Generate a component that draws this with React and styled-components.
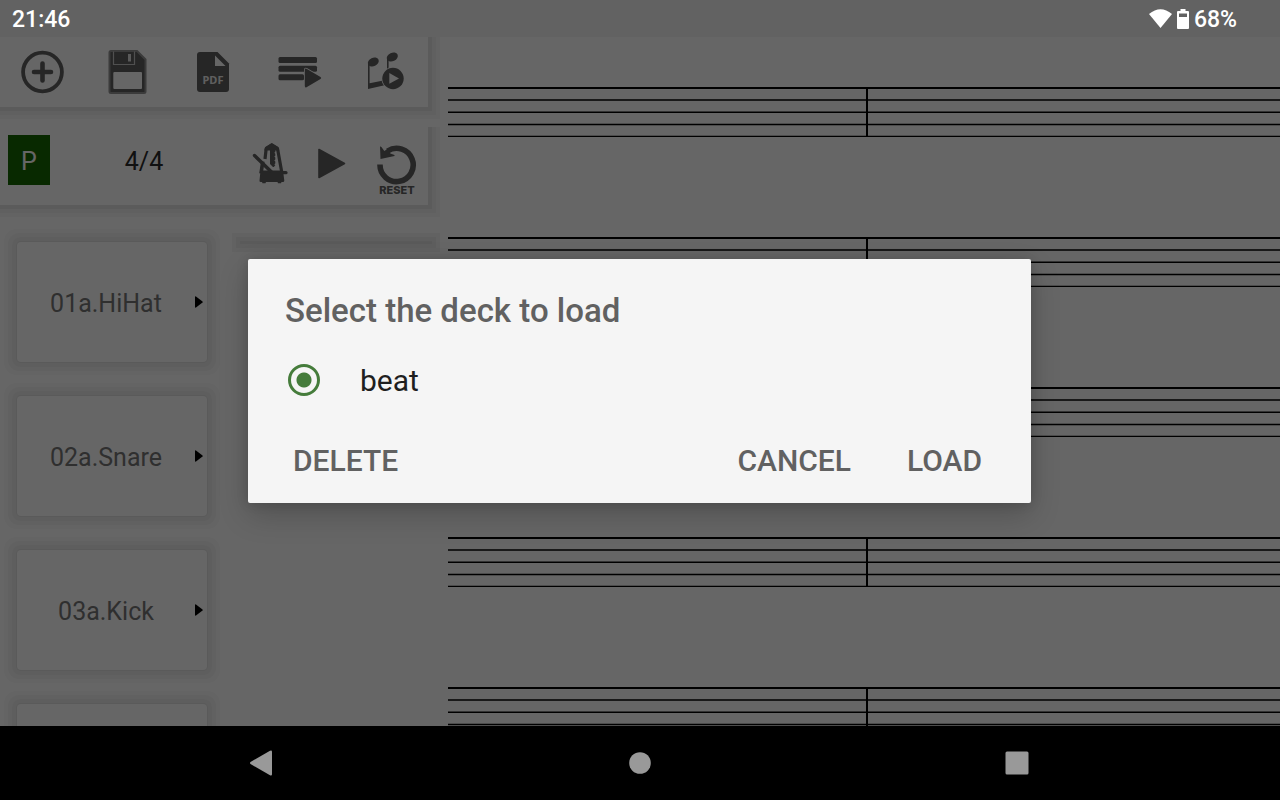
import React, { useState } from 'react'
import styled, { createGlobalStyle } from 'styled-components'

const GlobalStyle = createGlobalStyle`
  * {
    box-sizing: border-box;
  }
  body {
    margin: 0;
    background: #000;
    font-family: Roboto, "Liberation Sans", sans-serif;
  }
  button {
    border: 0;
    padding: 0;
    background: none;
    font-family: inherit;
    color: inherit;
    cursor: pointer;
  }
  svg {
    display: block;
  }
`

const Screen = styled.div`
  display: flex;
  flex-direction: column;
  height: 100vh;
  overflow: hidden;
`

const StatusBar = styled.header`
  display: flex;
  align-items: center;
  justify-content: space-between;
  flex: none;
  height: 37px;
  padding: 1px 43px 0 12px;
  background: #626262;
  color: #fff;
  font-size: 23px;
  font-weight: 500;
`

const StatusIcons = styled.div`
  display: flex;
  align-items: center;
  gap: 5px;
`

const Main = styled.main`
  position: relative;
  display: flex;
  flex: 1;
  min-height: 0;
  overflow: hidden;
  background: #fff;
`

const Panel = styled.section`
  flex: none;
  width: 448px;
`

const Bar = styled.div`
  width: 428px;
  margin-bottom: 20px;
  background: #fff;
  color: #5f5f5f;
  box-shadow: 0 0 0 4px #e4e4e4, 0 0 0 8px #f0f0f0, 0 0 0 12px #f8f8f8;
  clip-path: inset(0 -12px -12px 0);
`

const FileBar = styled(Bar)`
  display: grid;
  grid-template-columns: repeat(5, 1fr);
  height: 70px;
`

const PlayBar = styled(Bar)`
  display: flex;
  align-items: center;
  height: 78px;
  padding: 0 0 6px 8px;
  margin-bottom: 37px;
`

const IconButton = styled.button`
  display: flex;
  flex-direction: column;
  align-items: center;
  justify-content: center;
  width: ${({ $width }) => $width || 'auto'};
`

const ResetButton = styled(IconButton)`
  margin-top: 12px;
`

const ResetLabel = styled.span`
  font-family: Inter, sans-serif;
  font-size: 11px;
  line-height: 10px;
  font-weight: 800;
`

const ModeButton = styled.button`
  width: 42px;
  height: 50px;
  margin-bottom: 6px;
  padding-top: 2px;
  background: #146600;
  color: #fff;
  font-size: 25px;
`

const Signature = styled.button`
  flex: 1;
  height: 50px;
  margin-bottom: 4px;
  color: #2b2b2b;
  font-size: 25px;
`

const Decks = styled.div`
  display: grid;
  grid-template-columns: 190px 190px;
  gap: 34px;
  align-items: start;
  padding-left: 17px;
`

const Column = styled.div`
  display: flex;
  flex-direction: column;
  gap: 34px;
`

const Card = styled.button`
  display: flex;
  align-items: center;
  height: 120px;
  padding-right: 4px;
  border-radius: 4px;
  background: #fff;
  color: #777;
  font-size: 25px;
  box-shadow: 0 0 0 1px #e0e0e0, 0 0 0 5px #ebebeb, 0 0 0 9px #f2f2f2, 0 0 0 13px #fafafa;
`

const CardLabel = styled.span`
  flex: 1;
  padding-top: 2px;
`

const EmptyCard = styled.div`
  height: 1px;
  background: #e0e0e0;
  box-shadow: 0 0 0 1px #e0e0e0, 0 0 0 5px #ebebeb, 0 0 0 9px #f5f5f5;
`

const Score = styled.section`
  display: flex;
  flex-direction: column;
  flex: 1;
  min-width: 0;
  gap: 100px;
  padding-top: 50px;
`

const StaffLines = styled.svg`
  flex: none;
  width: 100%;
  height: 50px;
`

const Scrim = styled.div`
  position: absolute;
  inset: 0;
  display: flex;
  align-items: center;
  justify-content: center;
  padding: 0 1px 1px 0;
  background: rgba(0, 0, 0, 0.6);
`

const Dialog = styled.form`
  width: 90%;
  max-width: 783px;
  padding: 31px 37px 11px;
  border-radius: 2px;
  background: #f5f5f5;
  box-shadow: 0 12px 30px rgba(0, 0, 0, 0.2), 0 0 12px rgba(0, 0, 0, 0.15);
`

const DialogTitle = styled.h2`
  margin: 0;
  color: #616161;
  font-size: 33px;
  line-height: 42px;
  font-weight: 500;
`

const Option = styled.label`
  display: flex;
  align-items: center;
  gap: 40px;
  height: 60px;
  margin: 18px 0;
  padding-left: 3px;
  color: #1f1f1f;
  font-size: 30px;
`

const Radio = styled.input`
  appearance: none;
  flex: none;
  width: 32px;
  height: 32px;
  margin: 0;
  border: 3px solid #457c3b;
  border-radius: 50%;
  background: ${({ checked }) => (checked ? 'radial-gradient(circle, #457c3b 7px, transparent 8px)' : 'none')};
`

const Actions = styled.div`
  display: flex;
  gap: 40px;
  padding-right: 4px;
`

const Action = styled.button`
  height: 64px;
  padding: 0 8px;
  color: #616161;
  font-size: 30px;
  font-weight: 500;

  &:first-child {
    margin-right: auto;
  }
`

const NavBar = styled.nav`
  display: flex;
  flex: none;
  height: 74px;
  padding: 0 5.8%;
  background: #000;
  color: #999;
`

const NavButton = styled.button`
  display: flex;
  flex: 1;
  align-items: center;
  justify-content: center;
`

const AddIcon = () => (
  <svg width="48" height="48" viewBox="19 48 48 48" fill="none" stroke="currentColor">
    <circle cx="42.5" cy="72" r="19.4" strokeWidth="3.8" />
    <path d="M42.5 63.5v17M34 72h17" strokeWidth="4.6" strokeLinecap="round" />
  </svg>
)

const SaveIcon = () => (
  <svg width="48" height="48" viewBox="104 48 48 48">
    <path d="M111 51h26l8.5 8.5v32a1.5 1.5 0 0 1-1.5 1.5h-33a1.5 1.5 0 0 1-1.5-1.5v-39a1.5 1.5 0 0 1 1.5-1.5z" fill="currentColor" stroke="#939393" strokeWidth="2" />
    <path d="M113.5 51.5v13h21v-13" fill="none" stroke="#c8c8c8" strokeWidth="1.2" />
    <rect x="128" y="54" width="3" height="7.5" fill="#e0e0e0" />
    <rect x="113.3" y="72" width="28.7" height="17" rx="1" fill="#fff" />
  </svg>
)

const PdfIcon = () => (
  <svg width="48" height="48" viewBox="190 48 48 48">
    <path d="M200 52h17.500L229 63.500V89a3 3 0 0 1-3 3h-26a3 3 0 0 1-3-3V55a3 3 0 0 1 3-3z" fill="currentColor" />
    <path d="M215 55.500v10.500h10.500z" fill="#fff" />
    <text x="213" y="84" textAnchor="middle" fontFamily="Noto Sans, sans-serif" fontWeight="700" fontSize="11" fill="#eee">PDF</text>
  </svg>
)

const QueueIcon = () => (
  <svg width="48" height="48" viewBox="275 48 48 48" fill="currentColor">
    <rect x="277.5" y="57" width="38.5" height="6" rx="1.5" />
    <rect x="277.5" y="65.7" width="38.5" height="6" rx="1.5" />
    <rect x="277.5" y="74.3" width="25.5" height="6" rx="1.5" />
    <path d="M305.5 68.800l14 8.200q1.500 1 0 2l-14 8.200q-1.700.8-1.700-1.400v-15.800q0-2 1.700-1.200z" stroke="#fff" strokeWidth="1.6" paintOrder="stroke" />
  </svg>
)

const SongIcon = () => (
  <svg width="48" height="48" viewBox="361 48 48 48" fill="currentColor">
    <path d="M368 62h1.600v21.300l15-3v5L368 89z" />
    <ellipse cx="373.3" cy="62" rx="5.700" ry="4.200" transform="rotate(-25 373.3 62)" />
    <path d="M387 57h1.600v12H387z" />
    <ellipse cx="392.3" cy="57" rx="5.800" ry="4.200" transform="rotate(-25 392.3 57)" />
    <circle cx="393" cy="78.5" r="10.7" stroke="#fff" strokeWidth="1.6" paintOrder="stroke" />
    <path d="M389.3 73v10.800l9.700-5.300z" fill="#fff" />
  </svg>
)

const MetronomeIcon = () => (
  <svg width="40" height="44" viewBox="248 141 40 44" fill="none" stroke="currentColor">
    <path d="M265 159l1.200-10.500 5.500-3.500 5.800 3.500 4.500 25" strokeWidth="3.2" strokeLinejoin="round" />
    <path d="M264.3 150.500l1-3.500 6.500-4 6.500 4 1 3.500z" fill="currentColor" stroke="none" />
    <path d="M262.8 161.500l-1.800 12" strokeWidth="3.6" />
    <path d="M270 149h3.500l1.800 1v2l-1 .8 1 1v2l-1 .8 1 1v2l-1 .8 1 1v2l-1 .8 1 1-1.500 1.800h-.8l-3-3z" fill="currentColor" stroke="none" />
    <path d="M260.500 170.500h22.500l1.300 10q0 1.500-1.300 1.500h-1.500l-.5 1.200h-3l-.5-1.200h-11.500l-.5 1.200h-3l-.5-1.200h-1.200q-1.500 0-1.300-1.500z" fill="currentColor" stroke="none" />
    <path d="M254.5 155.500l17 16.500" strokeWidth="3.4" strokeLinecap="round" />
    <path d="M272 172.700h14" strokeWidth="3.2" strokeLinecap="round" />
  </svg>
)

const PlayIcon = () => (
  <svg width="32" height="44" viewBox="316 141 32 44">
    <path d="M319 149.500v28l25.500-14z" fill="currentColor" stroke="currentColor" strokeWidth="1.6" strokeLinejoin="round" />
  </svg>
)

const ResetIcon = () => (
  <svg width="44" height="42" viewBox="375 143 44 42">
    <path d="M380 164.500a16.600 16.600 0 1 0 7.600-13.500" fill="none" stroke="currentColor" strokeWidth="5.6" />
    <path d="M380 146.500q1.200-.5 2.500 2l1.800 2.500 4-2.500 2 5 4.200 1.500v1l-14 3z" fill="currentColor" />
  </svg>
)

const WifiIcon = () => (
  <svg width="23" height="20" viewBox="0 0 23 20" fill="#fff">
    <path d="M0 5Q11.5-4.500 23 5L11.500 19z" />
  </svg>
)

const BatteryIcon = () => (
  <svg width="12" height="20" viewBox="0 0 12 20">
    <path d="M3.500 0h5v2H11a1 1 0 0 1 1 1v16a1 1 0 0 1-1 1H1a1 1 0 0 1-1-1V3a1 1 0 0 1 1-1h2.500z" fill="#fff" />
    <path d="M2 4.500h8V8H2z" fill="#626262" />
  </svg>
)

const lines = [0, 12.25, 24.5, 36.75, 48.75]

const Staff = () => (
  <StaffLines>
    {lines.map((y, i) => (
      <rect key={y} x="0" y={y} width="100%" height={i === 0 ? 2 : 1.5} fill="#000" />
    ))}
    <rect x="418" y="0" width="2" height="50" fill="#000" />
  </StaffLines>
)

// the fourth slot has no sample assigned yet
const tracks = ['01a.HiHat', '02a.Snare', '03a.Kick', '']

const fileActions = [
  { label: 'New', icon: <AddIcon /> },
  { label: 'Save', icon: <SaveIcon /> },
  { label: 'Export PDF', icon: <PdfIcon /> },
  { label: 'Open list', icon: <QueueIcon /> },
  { label: 'Play song', icon: <SongIcon /> },
]

const App = () => {
  const [deck, setDeck] = useState('beat')

  return (
    <Screen>
      <GlobalStyle />
      <StatusBar>
        <span>21:46</span>
        <StatusIcons>
          <WifiIcon />
          <BatteryIcon />
          <span>68%</span>
        </StatusIcons>
      </StatusBar>

      <Main>
        <Panel>
          <FileBar>
            {fileActions.map(({ label, icon }) => (
              <IconButton key={label} aria-label={label}>{icon}</IconButton>
            ))}
          </FileBar>
          <PlayBar>
            <ModeButton>P</ModeButton>
            <Signature>4/4</Signature>
            <IconButton $width="60px" aria-label="Metronome"><MetronomeIcon /></IconButton>
            <IconButton $width="68px" aria-label="Play"><PlayIcon /></IconButton>
            <ResetButton $width="62px">
              <ResetIcon />
              <ResetLabel>RESET</ResetLabel>
            </ResetButton>
          </PlayBar>
          <Decks>
            <Column>
              {tracks.map((name) => (
                <Card key={name} aria-label={name || 'Empty slot'}>
                  <CardLabel>{name}</CardLabel>
                  <svg width="8" height="12" viewBox="0 0 8 12">
                    <path d="M0 1q0-1 1-.5l6.500 5q.5.5 0 1L1 11.500q-1 .5-1-.5z" fill="#000" />
                  </svg>
                </Card>
              ))}
            </Column>
            <EmptyCard />
          </Decks>
        </Panel>

        <Score>
          <Staff />
          <Staff />
          <Staff />
          <Staff />
          <Staff />
        </Score>

        <Scrim>
          <Dialog role="dialog" aria-labelledby="deck-title" onSubmit={(e) => e.preventDefault()}>
            <DialogTitle id="deck-title">Select the deck to load</DialogTitle>
            <Option>
              <Radio type="radio" name="deck" value="beat" checked={deck === 'beat'} onChange={() => setDeck('beat')} />
              beat
            </Option>
            <Actions>
              <Action type="button">DELETE</Action>
              <Action type="button">CANCEL</Action>
              <Action type="submit">LOAD</Action>
            </Actions>
          </Dialog>
        </Scrim>
      </Main>

      <NavBar>
        <NavButton aria-label="Back">
          <svg width="27" height="26" viewBox="0 0 27 26" fill="currentColor">
            <path d="M1.500 12q-1 1 0 2L21 25.200q2 .8 2-1V1.800q0-1.800-2-1z" />
          </svg>
        </NavButton>
        <NavButton aria-label="Home">
          <svg width="22" height="22" viewBox="0 0 22 22" fill="currentColor">
            <circle cx="11" cy="11" r="10.8" />
          </svg>
        </NavButton>
        <NavButton aria-label="Recent apps">
          <svg width="24" height="24" viewBox="0 0 24 24" fill="currentColor">
            <rect x="0.5" y="0.5" width="23" height="23" rx="1.5" />
          </svg>
        </NavButton>
      </NavBar>
    </Screen>
  )
}

export default App
